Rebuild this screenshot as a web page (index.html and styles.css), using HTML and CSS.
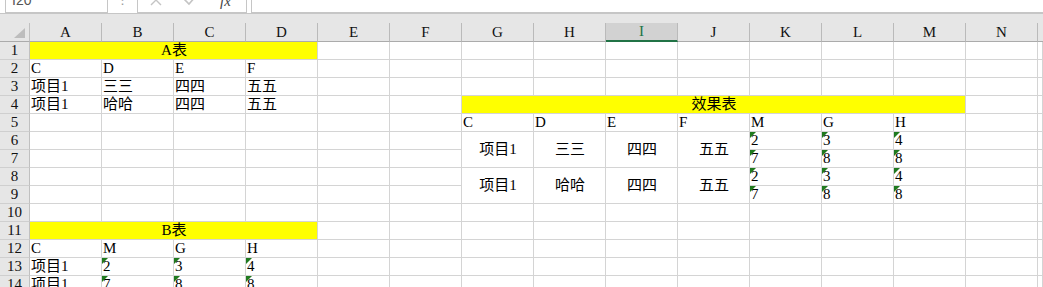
FILE: index.html
```html
<!DOCTYPE html>
<html lang="zh-CN">
<head>
    <meta charset="UTF-8">
    <title>效果表</title>
    <link rel="stylesheet" href="styles.css">
</head>
<body>
    <div class="formula-bar">
        <div class="name-box">I20</div>
        <div class="dots">⋮</div>
        <div class="fx-box">
            <svg class="ico-x" width="12" height="12" viewBox="0 0 12 12"><path d="M1 1 L11 11 M11 1 L1 11" stroke="#c4c4c4" stroke-width="1.4" fill="none"/></svg>
            <svg class="ico-ok" width="14" height="12" viewBox="0 0 14 12"><path d="M1 5 L6 10 L13 2" stroke="#c4c4c4" stroke-width="1.6" fill="none"/></svg>
            <span class="fx">fx</span>
        </div>
        <div class="input-box"></div>
    </div>
    <div class="head-gap"></div>

    <div class="sheet">
        <table>
            <thead>
                <tr>
                    <th class="corner"><svg width="12" height="11" viewBox="0 0 12 11"><polygon points="11,0 11,10 0,10" fill="#bdbdbd"/></svg></th>
                    <th class="col">A</th><th class="col">B</th><th class="col">C</th><th class="col">D</th><th class="col">E</th><th class="col">F</th><th class="col">G</th><th class="col">H</th><th class="col active">I</th><th class="col">J</th><th class="col">K</th><th class="col">L</th><th class="col">M</th><th class="col">N</th><th class="col-rest"></th>
                </tr>
            </thead>
            <tbody>
                <tr><th>1</th><td colspan="4" class="fill">A表</td><td></td><td></td><td></td><td></td><td></td><td></td><td></td><td></td><td></td><td></td><td></td></tr>
                <tr><th>2</th><td>C</td><td>D</td><td>E</td><td>F</td><td></td><td></td><td></td><td></td><td></td><td></td><td></td><td></td><td></td><td></td><td></td></tr>
                <tr><th>3</th><td>项目1</td><td>三三</td><td>四四</td><td>五五</td><td></td><td></td><td></td><td></td><td></td><td></td><td></td><td></td><td></td><td></td><td></td></tr>
                <tr><th>4</th><td>项目1</td><td>哈哈</td><td>四四</td><td>五五</td><td></td><td></td><td colspan="7" class="fill">效果表</td><td></td><td></td></tr>
                <tr><th>5</th><td></td><td></td><td></td><td></td><td></td><td></td><td>C</td><td>D</td><td>E</td><td>F</td><td>M</td><td>G</td><td>H</td><td></td><td></td></tr>
                <tr><th>6</th><td></td><td></td><td></td><td></td><td></td><td></td><td rowspan="2" class="mid">项目1</td><td rowspan="2" class="mid">三三</td><td rowspan="2" class="mid">四四</td><td rowspan="2" class="mid">五五</td><td class="num">2</td><td class="num">3</td><td class="num">4</td><td></td><td></td></tr>
                <tr><th>7</th><td></td><td></td><td></td><td></td><td></td><td></td><td class="num">7</td><td class="num">8</td><td class="num">8</td><td></td><td></td></tr>
                <tr><th>8</th><td></td><td></td><td></td><td></td><td></td><td></td><td rowspan="2" class="mid">项目1</td><td rowspan="2" class="mid">哈哈</td><td rowspan="2" class="mid">四四</td><td rowspan="2" class="mid">五五</td><td class="num">2</td><td class="num">3</td><td class="num">4</td><td></td><td></td></tr>
                <tr><th>9</th><td></td><td></td><td></td><td></td><td></td><td></td><td class="num">7</td><td class="num">8</td><td class="num">8</td><td></td><td></td></tr>
                <tr><th>10</th><td></td><td></td><td></td><td></td><td></td><td></td><td></td><td></td><td></td><td></td><td></td><td></td><td></td><td></td><td></td></tr>
                <tr><th>11</th><td colspan="4" class="fill">B表</td><td></td><td></td><td></td><td></td><td></td><td></td><td></td><td></td><td></td><td></td><td></td></tr>
                <tr><th>12</th><td>C</td><td>M</td><td>G</td><td>H</td><td></td><td></td><td></td><td></td><td></td><td></td><td></td><td></td><td></td><td></td><td></td></tr>
                <tr><th>13</th><td>项目1</td><td class="num">2</td><td class="num">3</td><td class="num">4</td><td></td><td></td><td></td><td></td><td></td><td></td><td></td><td></td><td></td><td></td><td></td></tr>
                <tr><th>14</th><td>项目1</td><td class="num">7</td><td class="num">8</td><td class="num">8</td><td></td><td></td><td></td><td></td><td></td><td></td><td></td><td></td><td></td><td></td><td></td></tr>
            </tbody>
        </table>
    </div>
</body>
</html>
```
FILE: styles.css
```css
* {
    box-sizing: border-box;
}

html, body {
    margin: 0;
    height: 287px;
    overflow: hidden;
    background: #fff;
}

body {
    font-family: "Liberation Serif", "Noto Sans CJK SC", serif;
    font-size: 15px;
    color: #000;
}

/* formula bar, cut off at the top */
.formula-bar {
    display: flex;
    align-items: flex-end;
    height: 14px;
    overflow: hidden;
    border-bottom: 1px solid #c6c6c6;
    background: #fff;
}

.name-box {
    width: 103px;
    height: 24px;
    margin-left: 5px;
    padding: 0 0 4px 6px;
    border: 1px solid #c6c6c6;
    display: flex;
    align-items: flex-end;
    font-family: "Liberation Sans", sans-serif;
    font-size: 14px;
    line-height: 16px;
    color: #555;
}

.dots {
    width: 29px;
    text-align: center;
    color: #9a9a9a;
    font-family: "DejaVu Sans", sans-serif;
    font-size: 13px;
    line-height: 14px;
    padding-bottom: 6px;
}

.fx-box {
    width: 110px;
    height: 24px;
    border: 1px solid #c6c6c6;
    display: flex;
    align-items: flex-end;
    padding: 0 0 6px 12px;
}

.ico-ok {
    margin-left: 21px;
}

.fx {
    margin-left: 23px;
    font-family: "Liberation Serif", serif;
    font-style: italic;
    font-size: 15px;
    line-height: 14px;
    color: #444;
    margin-bottom: -2px;
}

.input-box {
    flex: 1;
    height: 24px;
    margin-left: 4px;
    border: 1px solid #c6c6c6;
    border-right: none;
}

.head-gap {
    height: 9px;
    background: #e6e6e6;
}

/* the grid */
.sheet table {
    border-collapse: separate;
    border-spacing: 0;
    table-layout: fixed;
    width: 1043px;
}

.sheet th, .sheet td {
    padding: 0;
    border-right: 1px solid #d4d4d4;
    border-bottom: 1px solid #d4d4d4;
    line-height: 17px;
    white-space: nowrap;
    overflow: hidden;
    font-weight: normal;
    vertical-align: bottom;
}

.sheet td {
    padding-left: 1px;
    text-align: left;
}

.sheet thead th {
    background: #e6e6e6;
    line-height: 18px;
    border-right-color: #bababa;
    border-bottom-color: #ababab;
    color: #111;
    text-align: center;
}

.sheet thead th.corner {
    width: 30px;
    border-right-color: #c0c0c0;
    text-align: right;
    vertical-align: bottom;
    padding: 0 3px 2px 0;
    line-height: 0;
}

.sheet thead th.col {
    width: 72px;
}

.sheet thead th.col-rest {
    border-right: none;
}

.sheet thead th.active {
    background: #d2d2d2;
    color: #217346;
    border-bottom: 2px solid #217346;
    line-height: 17px;
}

.sheet tbody th {
    background: #e6e6e6;
    border-right-color: #c0c0c0;
    border-bottom-color: #cfcfcf;
    color: #111;
    text-align: center;
}

.sheet td.fill {
    background: #ffff00;
    text-align: center;
}

.sheet td.mid {
    text-align: center;
    vertical-align: middle;
}

.sheet td.num {
    position: relative;
}

.sheet td.num::before {
    content: "";
    position: absolute;
    top: 0;
    left: 0;
    border-top: 6px solid #1f7a1f;
    border-right: 6px solid transparent;
}
```
